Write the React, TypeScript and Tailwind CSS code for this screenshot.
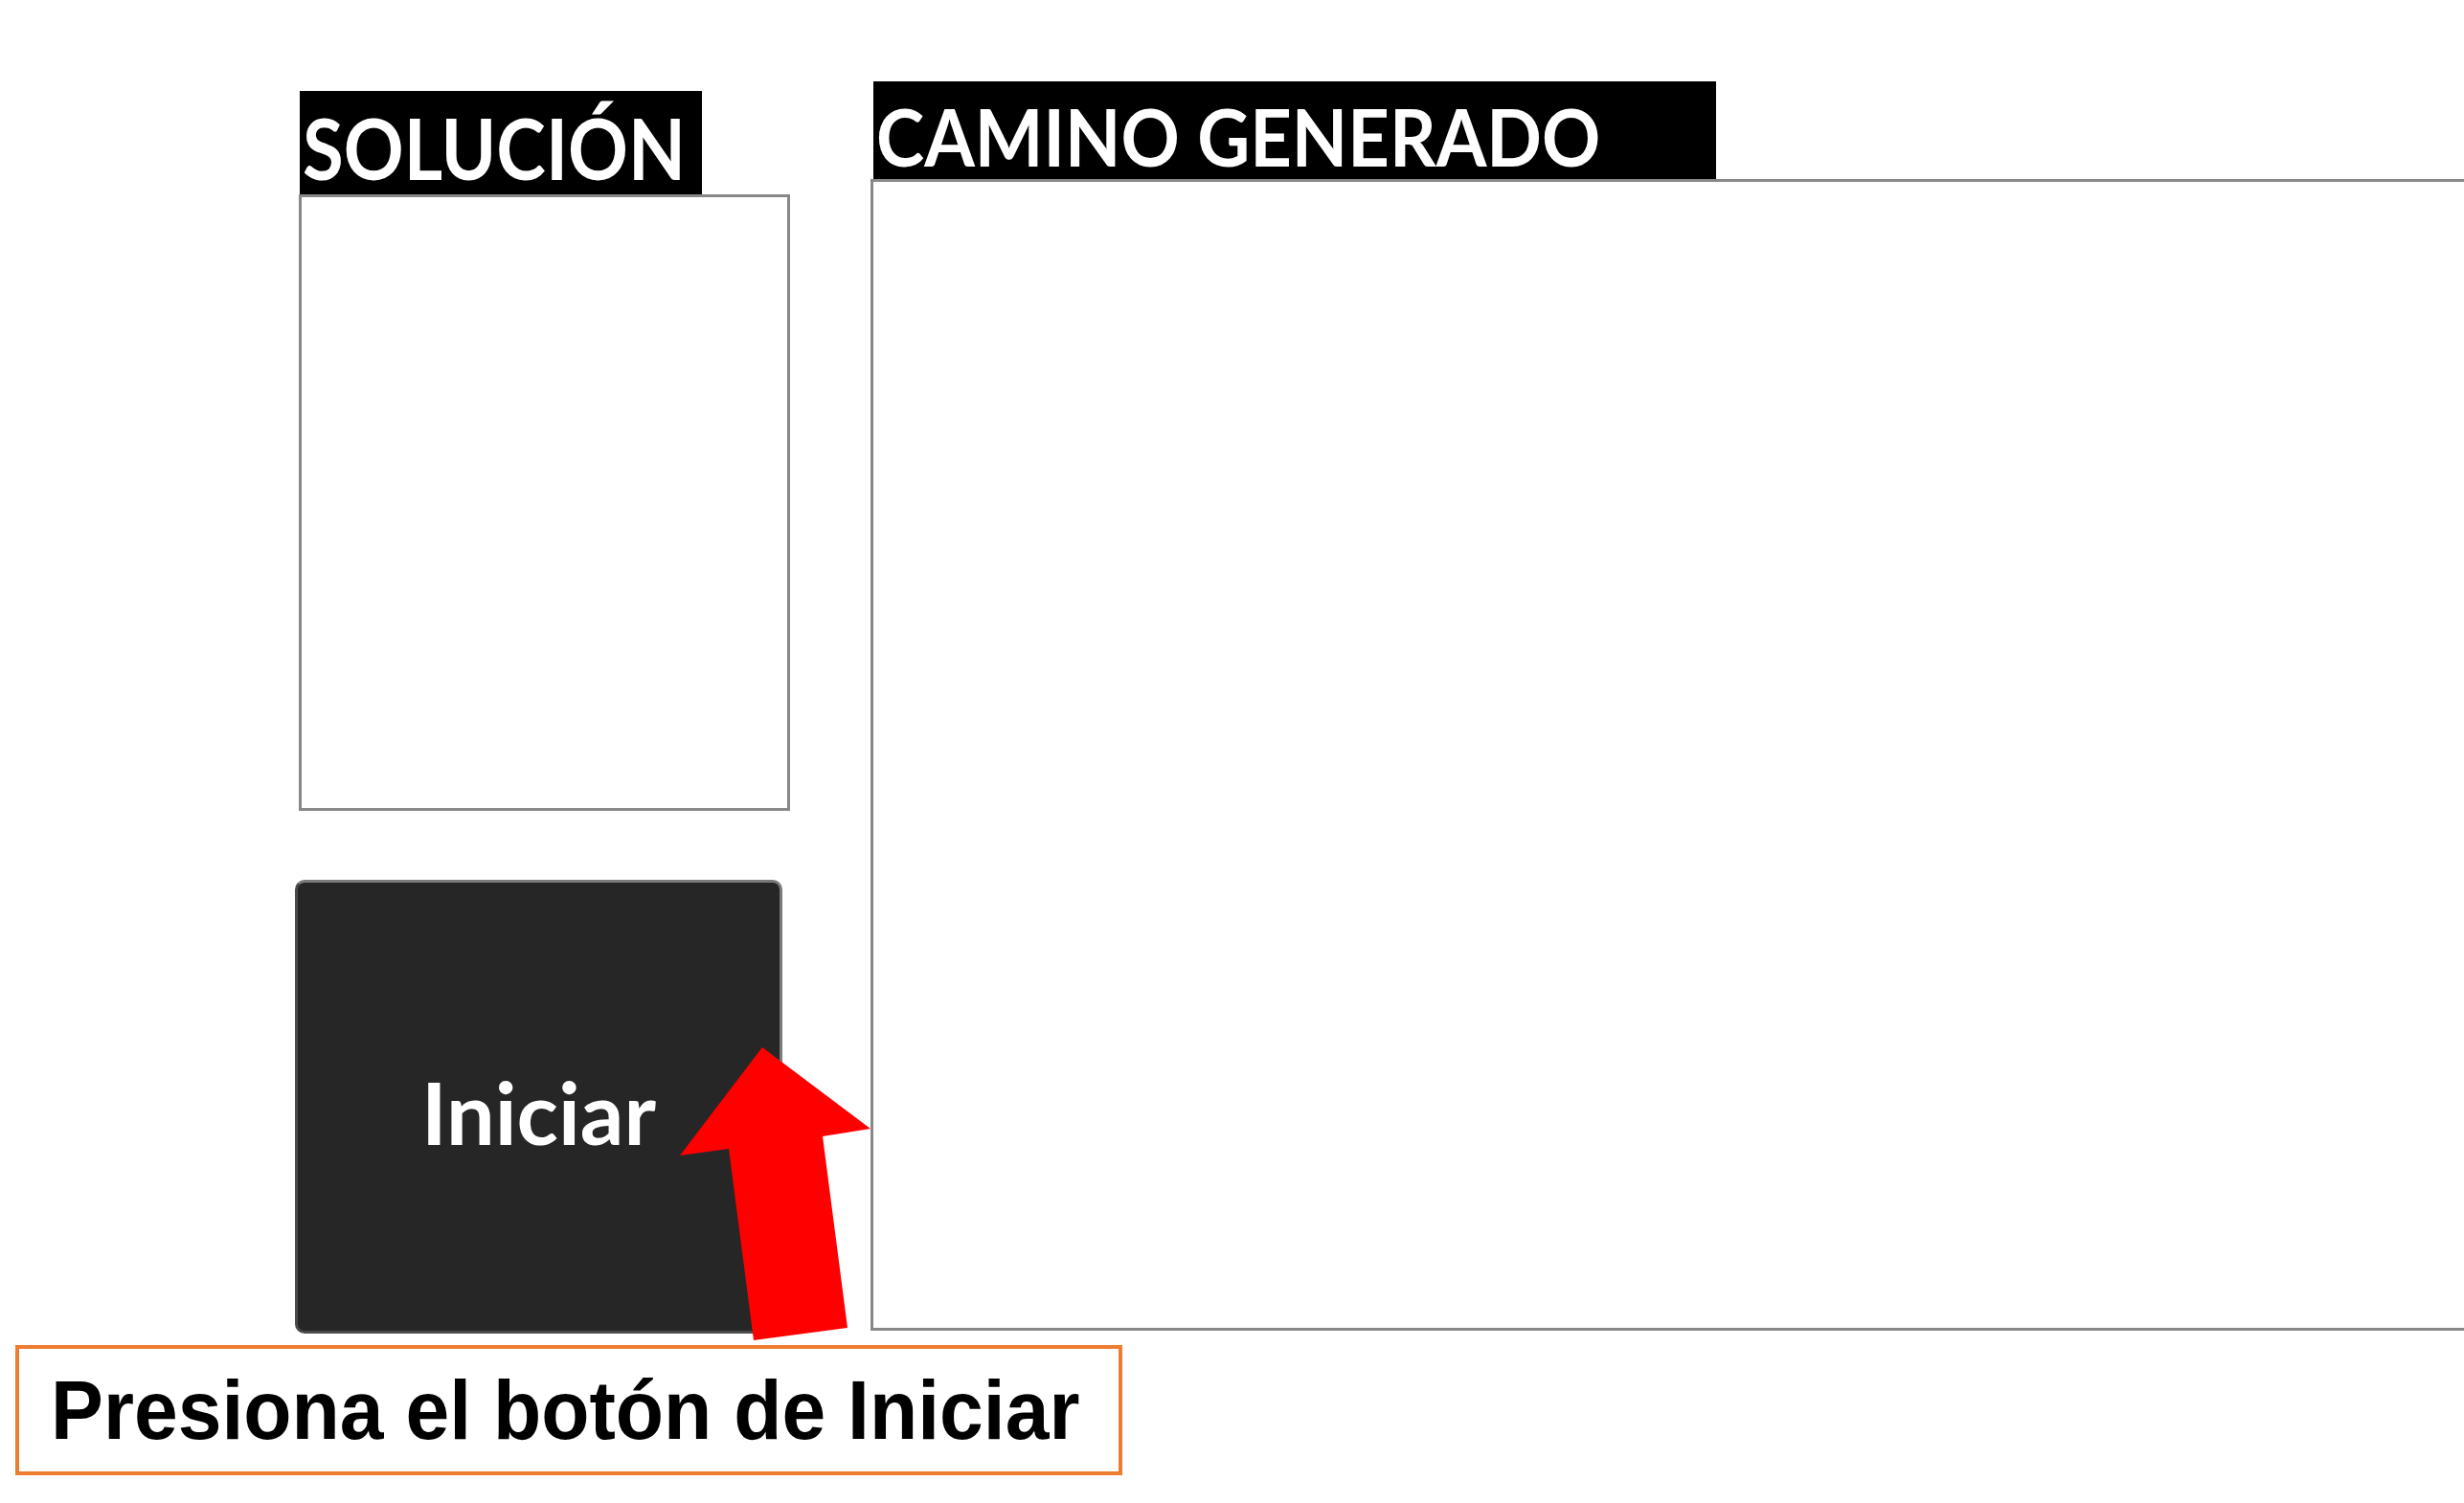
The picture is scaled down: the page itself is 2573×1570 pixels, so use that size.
import React from "react";

export default function App() {
  return (
    <div className="relative w-[2573px] h-[1570px] overflow-hidden bg-white">
      <div className="flex pl-[308px] pt-[85px]">
        {/* Left column */}
        <div className="flex flex-col w-[513px] pt-[10px]">
          <div className="ml-[5px] w-[420px] h-[108px] bg-black pl-[3px] pt-[15px]">
            <span
              className="inline-block origin-left scale-x-[0.885] text-white font-bold leading-none text-[88px] whitespace-nowrap"
              style={{ fontFamily: "Lato, 'Noto Sans', sans-serif" }}
            >
              SOLUCIÓN
            </span>
          </div>
          <div className="ml-[4px] w-[513px] h-[644px] border-[3px] border-[#888888] bg-white" />
          <button
            className="mt-[72px] w-[509px] h-[474px] rounded-[10px] bg-[#262626] border-[3px] border-t-[#7b7b7b] border-r-[#7b7b7b] border-l-[#4a4a4a] border-b-[#4a4a4a] flex items-center justify-center pt-[10px]"
          >
            <span
              className="text-white font-bold leading-none text-[90px]"
              style={{ fontFamily: "Lato, 'Noto Sans', sans-serif" }}
            >
              Iniciar
            </span>
          </button>
        </div>

        {/* Right column */}
        <div className="flex flex-col ml-[88px]">
          <div className="ml-[3px] w-[880px] h-[102px] bg-black pl-[3px] pt-[16px]">
            <span
              className="inline-block origin-left scale-x-[0.925] text-white font-bold leading-none text-[82px] whitespace-nowrap"
              style={{ fontFamily: "Lato, 'Noto Sans', sans-serif" }}
            >
              CAMINO GENERADO
            </span>
          </div>
          <div className="w-[1720px] h-[1203px] border-[3px] border-[#888888] bg-white" />
        </div>
      </div>

      {/* Annotation */}
      <div className="ml-[16px] mt-[12px] w-[1156px] h-[136px] border-4 border-[#ED7D31] flex items-center pl-[33px]">
        <span
          className="inline-block origin-left scale-x-[0.935] text-black font-bold leading-none text-[88px] whitespace-nowrap"
          style={{ fontFamily: "'Liberation Sans', Arial, sans-serif" }}
        >
          Presiona el botón de Iniciar
        </span>
      </div>

      {/* Red arrow */}
      <svg
        className="absolute left-0 top-0 pointer-events-none"
        width="2573"
        height="1570"
        viewBox="0 0 2573 1570"
      >
        <polygon
          points="796,1094 909,1179 859,1187 885,1387 787,1400 761,1200 710,1207"
          fill="#FF0000"
        />
      </svg>
    </div>
  );
}
